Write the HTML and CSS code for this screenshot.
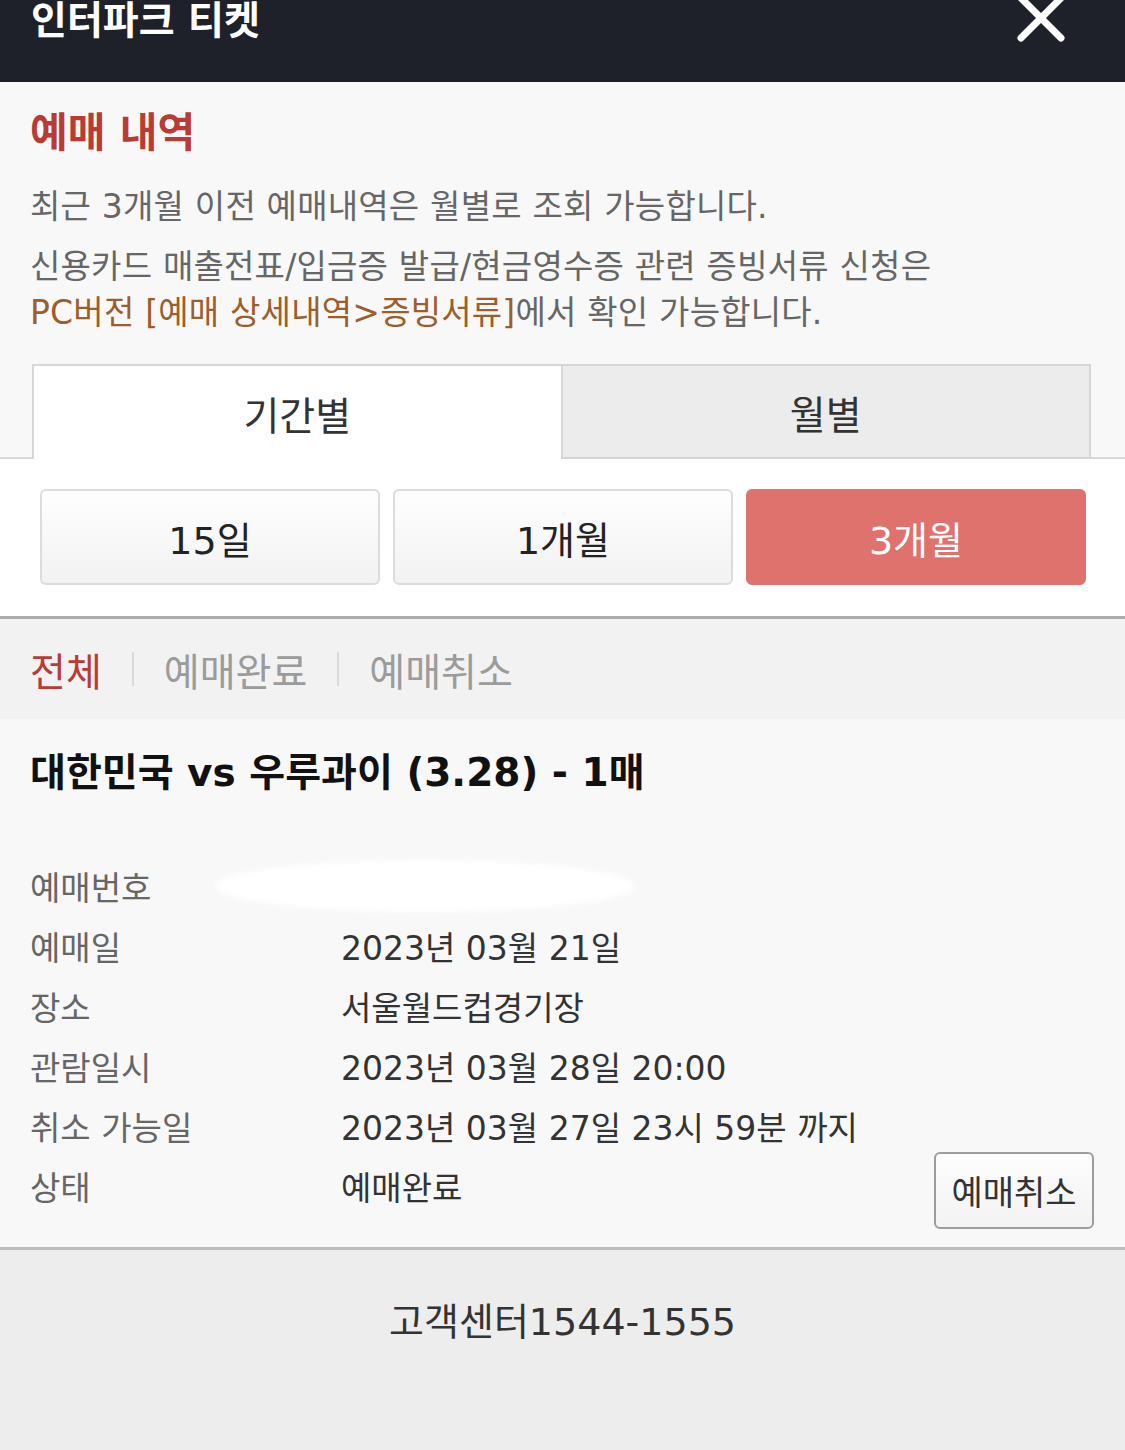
FILE: index.html
```html
<!DOCTYPE html>
<html lang="ko">
<head>
<meta charset="utf-8">
<title>인터파크 티켓 - 예매 내역</title>
<link rel="stylesheet" href="styles.css">
</head>
<body>
<header class="topbar">
  <h1 class="brand">인터파크 티켓</h1>
  <button class="close" aria-label="닫기">
    <svg width="52" height="48" viewBox="0 0 52 48"><path d="M6 4 L46 44 M46 4 L6 44" stroke="#fff" stroke-width="7" stroke-linecap="round" fill="none"/></svg>
  </button>
</header>

<section class="intro">
  <h2 class="intro-title">예매 내역</h2>
  <p class="note">최근 3개월 이전 예매내역은 월별로 조회 가능합니다.</p>
  <p class="note">신용카드 매출전표/입금증 발급/현금영수증 관련 증빙서류 신청은<br><span class="brown">PC버전 [예매 상세내역&gt;증빙서류]</span>에서 확인 가능합니다.</p>
</section>

<nav class="tabs">
  <div class="tab active">기간별</div>
  <div class="tab">월별</div>
</nav>

<div class="period">
  <button class="pbtn">15일</button>
  <button class="pbtn">1개월</button>
  <button class="pbtn on">3개월</button>
</div>

<div class="filter">
  <span class="f-item sel">전체</span>
  <span class="f-sep"></span>
  <span class="f-item">예매완료</span>
  <span class="f-sep"></span>
  <span class="f-item">예매취소</span>
</div>

<article class="item">
  <h3 class="item-title">대한민국 vs 우루과이 (3.28) - 1매</h3>
  <div class="rows">
    <div class="row"><span class="lbl">예매번호</span><span class="val"><span class="redact"></span></span></div>
    <div class="row"><span class="lbl">예매일</span><span class="val">2023년 03월 21일</span></div>
    <div class="row"><span class="lbl">장소</span><span class="val">서울월드컵경기장</span></div>
    <div class="row"><span class="lbl">관람일시</span><span class="val">2023년 03월 28일 20:00</span></div>
    <div class="row"><span class="lbl">취소 가능일</span><span class="val">2023년 03월 27일 23시 59분 까지</span></div>
    <div class="row"><span class="lbl">상태</span><span class="val">예매완료</span><button class="cancel">예매취소</button></div>
  </div>
</article>

<footer class="footer">고객센터1544-1555</footer>
</body>
</html>
```
FILE: styles.css
```css
* { box-sizing: border-box; }
html, body { margin: 0; padding: 0; }
body {
  width: 1125px;
  height: 1450px;
  overflow: hidden;
  background: #ededed;
  font-family: "DejaVu Sans", "Noto Sans CJK KR", sans-serif;
  color: #333;
}
button { font-family: inherit; }

.topbar {
  height: 82px;
  background: #1e2129;
  display: flex;
  justify-content: space-between;
  align-items: flex-start;
  padding: 0 58px 0 31px;
}
.brand {
  margin: 0;
  color: #fff;
  font-size: 39px;
  font-weight: 700;
  line-height: 39px;
  margin-top: 1px;
}
.close {
  border: 0;
  background: none;
  padding: 0;
  margin-top: -6px;
  width: 52px;
  height: 48px;
}
.close svg { display: block; }

.intro {
  background: #f8f8f8;
  padding: 25px 30px 28px;
}
.intro-title {
  margin: 0;
  color: #b83c35;
  font-size: 41px;
  font-weight: 700;
  line-height: 52px;
}
.note {
  margin: 25px 0 0;
  color: #666;
  font-size: 33px;
  line-height: 46px;
  letter-spacing: 0.2px;
}
.note + .note { margin-top: 14px; }
.brown { color: #9c5e2c; }

.tabs {
  display: flex;
  background: #f8f8f8;
  padding: 0 34px 0 32px;
  border-bottom: 2px solid #d6d6d6;
}
.tab {
  flex: 1;
  height: 93px;
  border: 2px solid #d6d6d6;
  border-bottom: 0;
  background: #ececec;
  color: #333;
  font-size: 39px;
  display: flex;
  align-items: center;
  justify-content: center;
}
.tab.active {
  background: #fff;
  border-right: 0;
  margin-bottom: -2px;
  height: 95px;
}

.period {
  background: #fff;
  display: flex;
  gap: 13px;
  padding: 30px 39px 31px 40px;
  border-bottom: 3px solid #adadad;
}
.pbtn {
  flex: 1;
  height: 96px;
  border: 2px solid #dcdcdc;
  border-radius: 6px;
  background: linear-gradient(#fefefe, #f2f2f2);
  color: #222;
  font-size: 38px;
  padding: 0;
}
.pbtn.on {
  background: #e0726d;
  border-color: #e0726d;
  color: #fff;
}

.filter {
  height: 100px;
  background: #f2f2f2;
  display: flex;
  align-items: center;
  padding: 0 30px;
  font-size: 39px;
}
.f-item { color: #9b9b9b; }
.f-item.sel { color: #b83c35; }
.f-sep {
  width: 2px;
  height: 34px;
  background: #dadada;
  margin: 0 30px;
}

.item {
  background: #f8f8f8;
  padding: 29px 31px 31px 30px;
  border-bottom: 3px solid #bdbdbd;
}
.item-title {
  margin: 0 0 58px;
  font-size: 39px;
  font-weight: 700;
  line-height: 50px;
  color: #111;
}
.row {
  display: flex;
  align-items: center;
  height: 60px;
  font-size: 33px;
}
.lbl { width: 311px; color: #666; flex: none; }
.val { flex: 1; color: #333; }
.redact {
  display: block;
  width: 420px;
  height: 52px;
  margin-left: -126px;
  background: #fff;
  border-radius: 50%;
  filter: blur(3px);
}
.cancel {
  flex: none;
  width: 160px;
  height: 77px;
  margin: -4px 0 -13px;
  border: 2px solid #9d9d9d;
  border-radius: 6px;
  background: linear-gradient(#fdfdfd, #f3f3f3);
  color: #333;
  font-size: 34px;
  padding: 0;
}

.footer {
  background: #ededed;
  text-align: center;
  font-size: 38px;
  line-height: 44px;
  padding-top: 50px;
  color: #333;
}
```
